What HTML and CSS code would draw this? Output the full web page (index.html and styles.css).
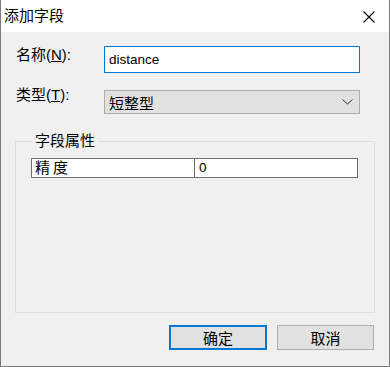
FILE: index.html
```html
<!DOCTYPE html>
<html lang="zh-CN">
<head>
    <meta charset="UTF-8">
    <meta name="viewport" content="width=device-width, initial-scale=1.0">
    <title>添加字段</title>
    <link rel="stylesheet" href="styles.css">
</head>
<body>
    <!-- Dialog Window -->
    <div class="dialog">
        <div class="titlebar">
            <span class="title">添加字段</span>
            <svg class="close" width="12" height="12" viewBox="0 0 12 12">
                <path d="M0.5 0.5 L11.5 11.5 M11.5 0.5 L0.5 11.5" stroke="#000" stroke-width="1.1" fill="none"/>
            </svg>
        </div>

        <div class="content">
            <!-- Name / Type -->
            <div class="form-row row-name">
                <label class="label">名称(<u>N</u>):</label>
                <div class="input">distance</div>
            </div>
            <div class="form-row row-type">
                <label class="label">类型(<u>T</u>):</label>
                <div class="select">
                    <span>短整型</span>
                    <svg width="11" height="6" viewBox="0 0 11 6">
                        <polyline points="0.5,0.5 5.5,5 10.5,0.5" stroke="#333" stroke-width="1" fill="none"/>
                    </svg>
                </div>
            </div>

            <!-- Field Properties -->
            <fieldset class="group">
                <legend>字段属性</legend>
                <div class="prop-grid">
                    <div class="prop-name">精度</div>
                    <div class="prop-value">0</div>
                </div>
            </fieldset>

            <!-- Buttons -->
            <div class="buttons">
                <button class="btn btn-default">确定</button>
                <button class="btn">取消</button>
            </div>
        </div>
    </div>
</body>
</html>
```

FILE: styles.css
```css
/* General Styles */
body {
    font-family: 'Liberation Sans', 'Noto Sans CJK SC', sans-serif;
    margin: 0;
    padding: 0;
    background-color: #f0f0f0;
    color: #000;
}

/* Window */
.dialog {
    width: 388px;
    height: 366px;
    background-color: #f0f0f0;
    border-left: 1px solid #7a7a7a;
    border-right: 1px solid #7a7a7a;
    border-bottom: 1px solid #7a7a7a;
    display: flex;
    flex-direction: column;
}

.titlebar {
    height: 32px;
    background-color: #fff;
    display: flex;
    align-items: center;
    justify-content: space-between;
    padding: 0 14px 0 3px;
    flex-shrink: 0;
}

.title {
    font-size: 15px;
    line-height: 20px;
}

.close {
    display: block;
    margin-top: 1px;
}

/* Content */
.content {
    padding: 14px 14px 0 14px;
    flex: 1;
}

.form-row {
    display: flex;
    align-items: flex-start;
    padding-left: 1px;
}

.label {
    width: 88px;
    font-size: 15px;
    line-height: 20px;
}

.row-name .label {
    margin-top: -1px;
}

.row-type {
    margin-top: 17px;
}

.row-type .label {
    margin-top: -5px;
}

.input {
    width: 250px;
    height: 25px;
    border: 1px solid #0078d7;
    background-color: #fff;
    font-size: 13.5px;
    line-height: 25px;
    padding-left: 4px;
}

.select {
    width: 256px;
    height: 24px;
    border: 1px solid #adadad;
    background-color: #e1e1e1;
    display: flex;
    align-items: center;
    justify-content: space-between;
    padding: 0 6px 0 4px;
    box-sizing: border-box;
    font-size: 15px;
}

.select svg {
    display: block;
}

/* Group Box */
.group {
    margin: 17px 0 0 0;
    padding: 7px 16px 0 15px;
    border: 1px solid #dcdcdc;
    height: 182px;
    box-sizing: border-box;
    min-width: 0;
}

.group legend {
    font-size: 15px;
    line-height: 20px;
    padding: 0 3px;
    margin-left: 1px;
}

.prop-grid {
    display: grid;
    grid-template-columns: 163px 1fr;
    border: 1px solid #6e6e6e;
    background-color: #fff;
    height: 20px;
    box-sizing: border-box;
}

.prop-name {
    font-size: 15px;
    line-height: 18px;
    letter-spacing: 3px;
    padding-left: 3px;
    border-right: 1px solid #6e6e6e;
}

.prop-value {
    font-size: 13.5px;
    line-height: 18px;
    padding-left: 4px;
}

/* Buttons */
.buttons {
    display: flex;
    justify-content: flex-end;
    gap: 10px;
    margin-top: 12px;
    padding-right: 1px;
}

.btn {
    width: 97px;
    height: 25px;
    font-family: inherit;
    font-size: 15px;
    background-color: #e1e1e1;
    border: 1px solid #adadad;
    padding: 0;
    margin: 0;
    color: #000;
}

.btn-default {
    width: 98px;
    border: 2px solid #0078d7;
}
```
